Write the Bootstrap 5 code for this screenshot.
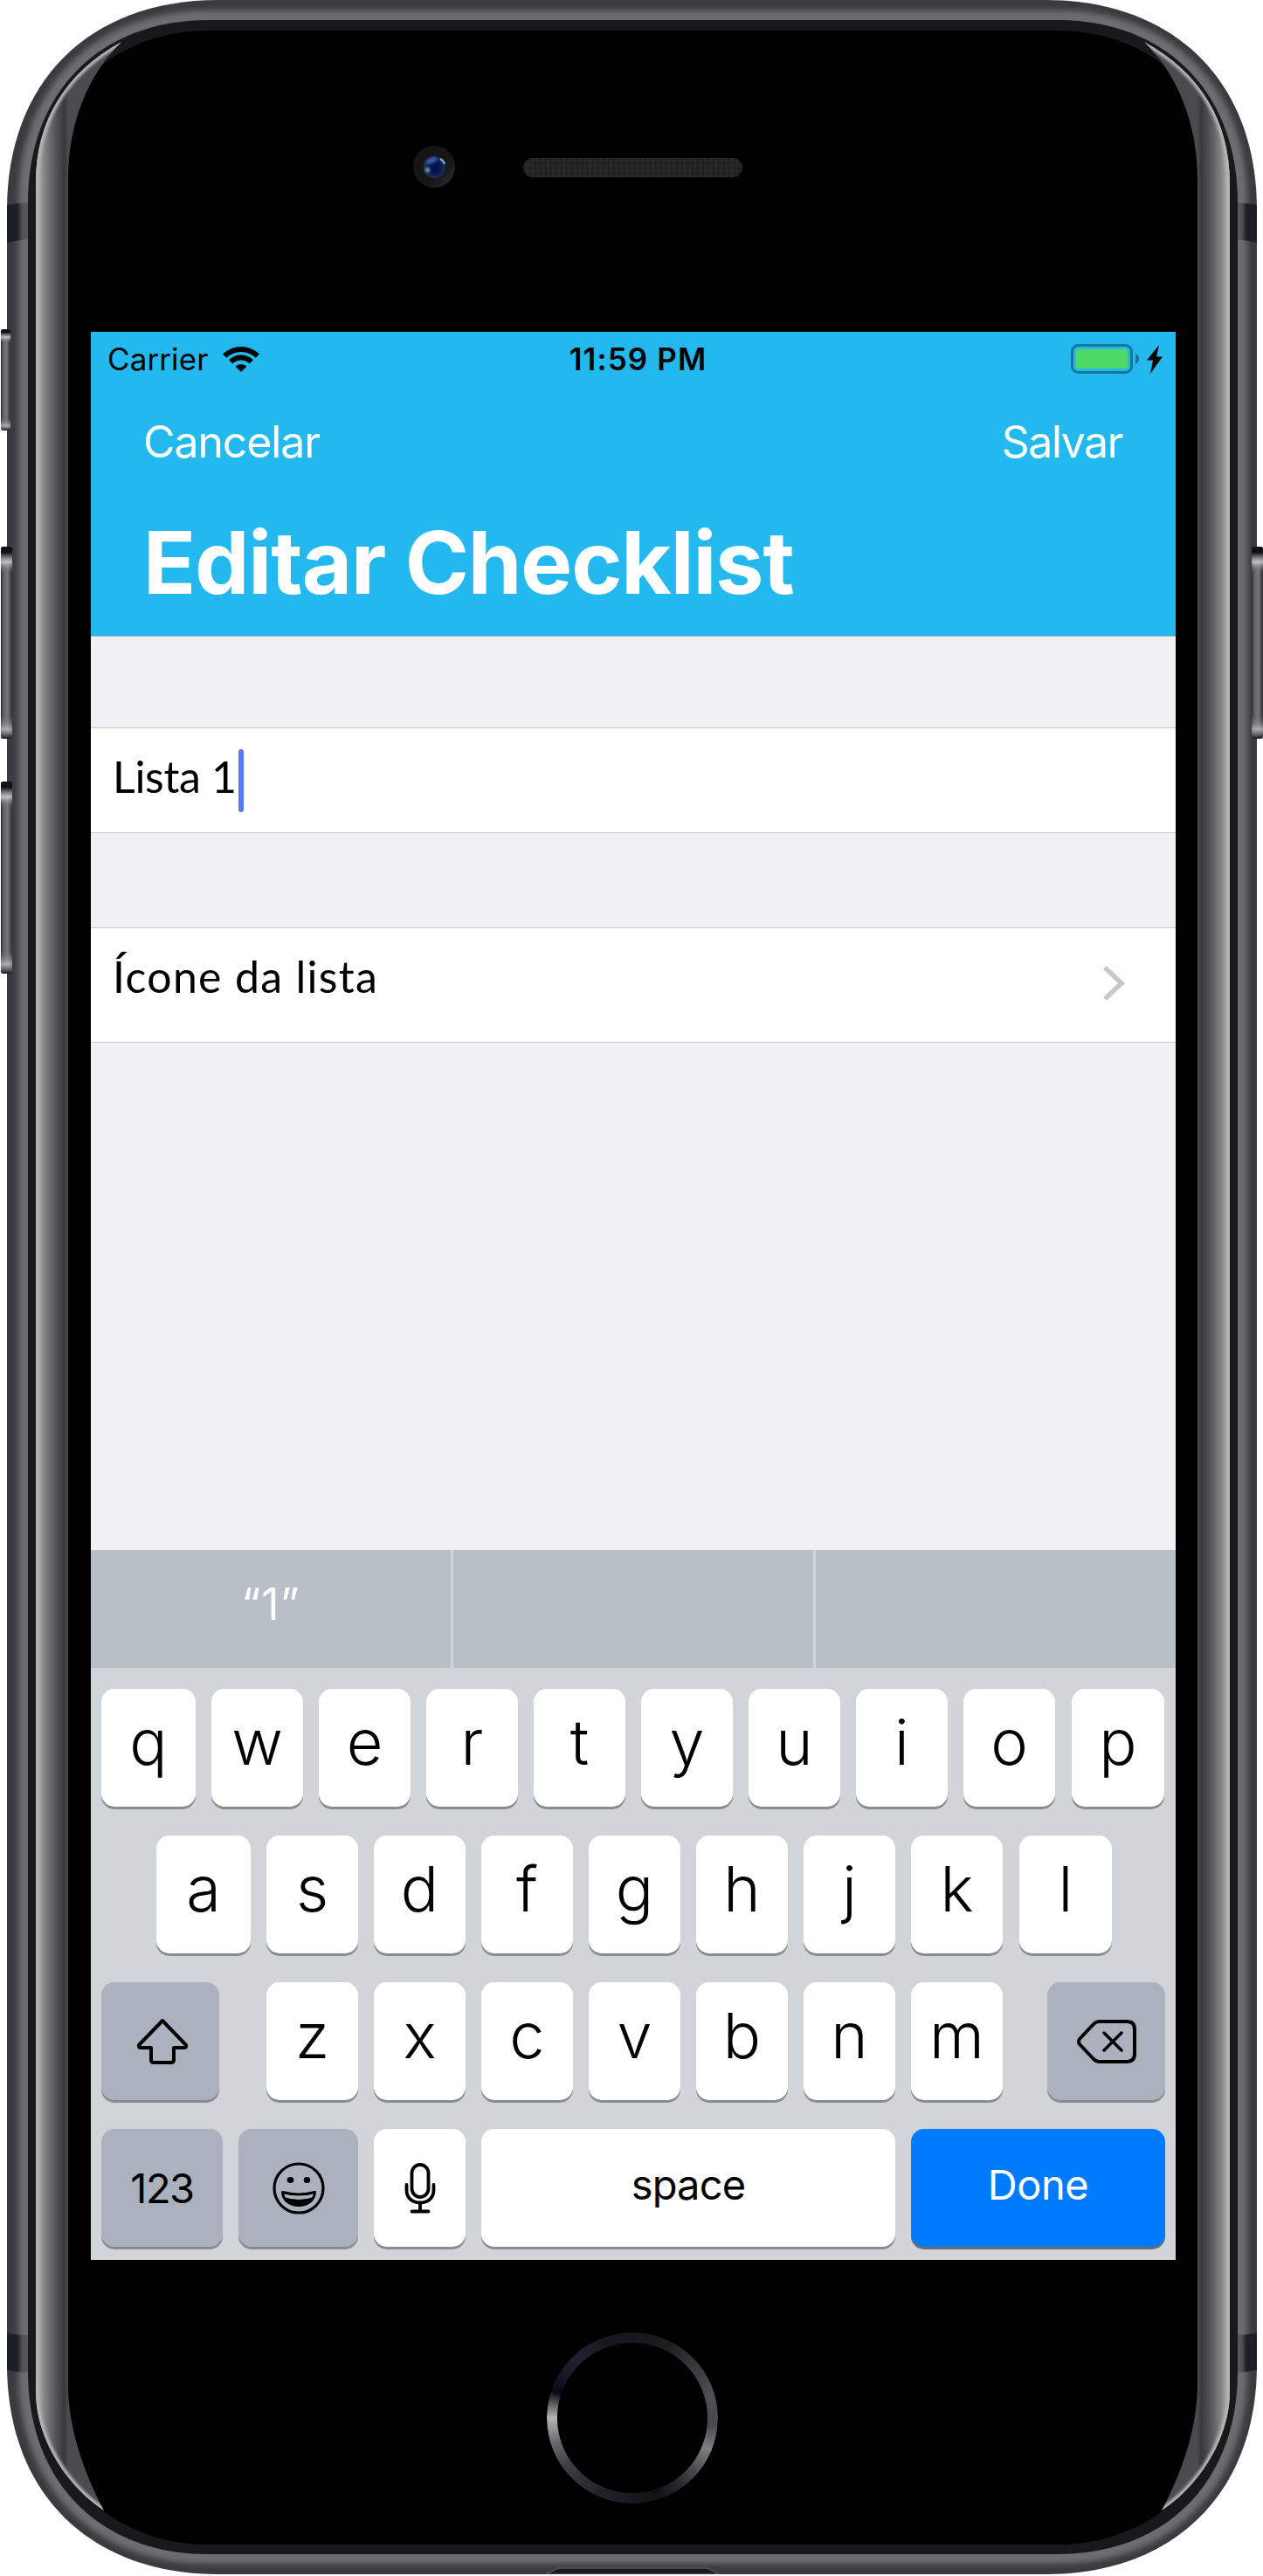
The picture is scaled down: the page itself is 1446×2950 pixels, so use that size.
<!DOCTYPE html>
<html lang="pt-BR">
<head>
<meta charset="utf-8">
<meta name="viewport" content="width=device-width, initial-scale=1">
<title>Editar Checklist</title>
<link href="https://cdn.jsdelivr.net/npm/bootstrap@5.3.0/dist/css/bootstrap.min.css" rel="stylesheet">
<style>
  body { background:#fff; font-family:Inter,"Liberation Sans",sans-serif; color:#000; }
  .phone { width:1446px; height:2950px; padding:380px 100px 0 104px; }
  .phone-shell { left:0; top:0; }
  .phone-screen { width:1242px; height:2208px; background:#efeff4; }
  .app-header { height:349px; background:#24b9ee; border-bottom:1px solid #a3a9ae; }
  .status-bar { height:60px; font-size:35px; line-height:1; padding:2px 15px 0 19px; }
  .status-bar svg { display:block; }
  .carrier { letter-spacing:.1px; }
  .clock { left:0; right:0; text-align:center; font-weight:600; letter-spacing:1.1px; padding-left:11px; }
  .app-nav { height:132px; padding:0 61px 0 60px; --bs-navbar-padding-y:0; }
  .app-nav .btn { --bs-btn-font-size:50px; --bs-btn-padding-x:0; --bs-btn-padding-y:0; --bs-btn-line-height:1; --bs-btn-border-width:0; color:#fff; }
  .cancel-btn { letter-spacing:-1.1px; }
  .save-btn { letter-spacing:-1.5px; }
  .app-title { height:156px; padding:0 60px 12px; font-size:99px; font-weight:700; line-height:1; letter-spacing:-1.1px; color:#fff; }
  .form-rows { font-family:Lato,"Liberation Sans",sans-serif; }
  .form-rows .list-group-item { border:solid #c8c7cc; border-width:1px 0; font-size:50px; line-height:1; padding:0 58px 0 25px; color:#000; background:#fff; }
  .row-name { margin-top:104px; height:121px; padding-bottom:10px !important; letter-spacing:-.3px; }
  .form-rows .row-icon { margin-top:108px; height:132px; letter-spacing:1.3px; border-top-width:1px; }
  .row-icon .lbl { padding-bottom:20px; }
  .row-icon svg { margin-bottom:4px; }
  .caret { width:6px; height:72px; border-radius:3px; background:#5479f1; margin:10px 0 0 2px; }
  .keyboard { background:#d1d4d9; height:813px; }
  .predictions { height:135px; background:#b8bfc7; color:#fff; font-size:50px; font-weight:400; line-height:1; letter-spacing:1px; }
  .predictions > div { flex:1 1 0; padding-bottom:12px; }
  .predictions > div + div { border-left:3px solid #d1d4d9; }
  .key-rows { padding:24px 12px 0; gap:33px; }
  .key-row { gap:18px; height:135px; }
  .key-row .btn { --bs-btn-padding-x:0; --bs-btn-padding-y:0; --bs-btn-border-width:0; --bs-btn-border-radius:15px; --bs-btn-line-height:1; --bs-btn-bg:#fff; --bs-btn-color:#000; width:105px; height:135px; font-size:72px; font-weight:350; padding-bottom:13px; box-shadow:0 3px 0 #888b8f; flex:none; display:flex; align-items:center; justify-content:center; }
  .key-row .btn.wide-start { width:108px; }
  .key-row .btn.wide-end { width:106px; margin-left:1px; }
  .key-row .btn.mod { --bs-btn-bg:#abb2bd; width:135px; padding-bottom:0; }
  .key-row .btn.numkey { width:139px; font-size:47px; font-weight:400; letter-spacing:-1.5px; }
  .key-row .btn.emojikey { width:137px; }
  .key-row .btn.mic { padding:0; }
  .key-row .btn.spacekey { width:474px; font-size:47px; font-weight:400; padding-bottom:9px; letter-spacing:-.8px; }
  .key-row .btn.donekey { --bs-btn-bg:#007aff; --bs-btn-color:#fff; width:291px; font-size:47px; font-weight:400; padding-bottom:9px; box-shadow:0 3px 0 #686c72; letter-spacing:-.5px; }
  .home-row { padding:0 61px 0 63px; }
  .letters { gap:18px; margin:0 auto 0 36px; }
</style>
</head>
<body>
<main class="phone position-relative overflow-hidden">
  <svg class="phone-shell position-absolute" width="1446" height="2950" viewBox="0 0 1446 2950" aria-hidden="true">
    <defs>
      <linearGradient id="btnL" x1="0" x2="1"><stop offset="0" stop-color="#26272b"/><stop offset=".2" stop-color="#5d5e63"/><stop offset=".6" stop-color="#77787c"/><stop offset="1" stop-color="#2b2c30"/></linearGradient>
      <linearGradient id="btnV" x1="0" x2="0" y1="0" y2="1"><stop offset="0" stop-color="#101114"/><stop offset=".03" stop-color="#101114"/><stop offset=".08" stop-color="#d8d8da" stop-opacity=".8"/><stop offset=".14" stop-color="#555" stop-opacity="0"/><stop offset=".87" stop-color="#555" stop-opacity="0"/><stop offset=".95" stop-color="#c8c8ca" stop-opacity=".7"/><stop offset="1" stop-color="#101114"/></linearGradient>
      <linearGradient id="rim" gradientUnits="userSpaceOnUse" x1="41" x2="78" y1="0" y2="0"><stop offset="0" stop-color="#b4b4b4"/><stop offset=".1" stop-color="#a5a5a4"/><stop offset=".28" stop-color="#828382"/><stop offset=".6" stop-color="#55565a"/><stop offset=".88" stop-color="#37383c"/><stop offset="1" stop-color="#4a4b4f"/></linearGradient>
      <linearGradient id="band" x1="0" x2="1"><stop offset="0" stop-color="#1b1f24"/><stop offset=".5" stop-color="#1d2126"/><stop offset=".72" stop-color="#505156"/><stop offset="1" stop-color="#58595d"/></linearGradient>
      <linearGradient id="camRing" x1="0" y1="0" x2="1" y2="1"><stop offset="0" stop-color="#161616"/><stop offset=".6" stop-color="#151515"/><stop offset="1" stop-color="#303030"/></linearGradient>
      <radialGradient id="lens"><stop offset="0" stop-color="#000f55"/><stop offset=".45" stop-color="#04154f"/><stop offset="1" stop-color="#222f52"/></radialGradient>
      <pattern id="mesh" width="6" height="6" patternUnits="userSpaceOnUse"><rect width="6" height="6" fill="#292929"/><path d="M0 .5H6M.5 0V6" stroke="#1e1e1e" stroke-width="2"/></pattern>
      <filter id="soft3" x="-5%" y="-5%" width="110%" height="110%"><feGaussianBlur stdDeviation="3"/></filter>
      <filter id="soft2" x="-50%" y="-50%" width="200%" height="200%"><feGaussianBlur stdDeviation="1.6"/></filter>
      <path id="outer" d="M250 0H1197C1347 0 1439 96 1439 240V2708C1439 2852 1347 2948 1197 2948H250C100 2948 8 2852 8 2708V240C8 96 100 0 250 0Z"/>
      <path id="inner" d="M238 23H1211C1334 23 1417 105 1417 232V2716C1417 2843 1334 2925 1211 2925H238C115 2925 32 2843 32 2716V232C32 105 115 23 238 23Z"/>
      <path id="rimShape" d="M139 48C75 83 41 138 41 210V2738C41 2795 78 2848 119 2875C92 2824 78 2775 78 2730V205C78 140 102 84 139 48Z"/>
      <clipPath id="outerClip"><use href="#outer"/></clipPath>
      <clipPath id="rimClip"><use href="#rimShape"/></clipPath>
    </defs>
    <use href="#outer" fill="#3a3b3f"/>
    <g clip-path="url(#outerClip)"><use href="#inner" fill="none" stroke="#6c6d70" stroke-width="22" filter="url(#soft3)"/></g>
    <g fill="url(#btnL)"><rect x="1" y="377" width="11" height="116" rx="3"/><rect x="1" y="626" width="13" height="220" rx="3"/><rect x="1" y="895" width="13" height="220" rx="3"/><rect x="1433" y="626" width="13" height="220" rx="3"/></g>
    <g fill="url(#btnV)"><rect x="1" y="377" width="11" height="116" rx="3"/><rect x="1" y="626" width="13" height="220" rx="3"/><rect x="1" y="895" width="13" height="220" rx="3"/><rect x="1433" y="626" width="13" height="220" rx="3"/></g>
    <path d="M8 235Q20 232 32 232V274Q20 275 8 278Z" fill="url(#band)"/>
    <path d="M8 2672Q20 2674 32 2674V2717Q20 2717 8 2714Z" fill="url(#band)"/>
    <g transform="translate(1447 0) scale(-1 1)">
      <path d="M8 235Q20 232 32 232V274Q20 275 8 278Z" fill="url(#band)"/>
      <path d="M8 2672Q20 2674 32 2674V2717Q20 2717 8 2714Z" fill="url(#band)"/>
    </g>
    <use href="#inner" fill="#18191b"/>
    <path fill="#000" d="M238 35H1211C1324 35 1406 120 1406 225V2724C1406 2829 1324 2914 1211 2914H238C125 2914 43 2829 43 2724V225C43 120 125 35 238 35Z"/>
    <g id="rimSide">
      <rect x="32" y="235" width="10" height="2480" fill="#18191b"/>
      <use href="#rimShape" fill="url(#rim)"/>
      <path clip-path="url(#rimClip)" d="M139 48C75 83 41 138 41 210V2738C41 2795 78 2848 119 2875" fill="none" stroke="#b5b5b5" stroke-width="7" filter="url(#soft2)"/>
    </g>
    <use href="#rimSide" transform="translate(1449 0) scale(-1 1)"/>
    <circle cx="497" cy="191" r="24" fill="url(#camRing)"/>
    <circle cx="497.5" cy="191.5" r="12.5" fill="url(#lens)"/>
    <ellipse cx="494" cy="184" rx="7" ry="3" transform="rotate(-25 494 184)" fill="#3b5bb5" filter="url(#soft2)"/>
    <circle cx="489.500" cy="194.500" r="2.500" fill="#93abc4" filter="url(#soft2)"/>
    <path d="M504 182Q508 184 509 188" stroke="#6fb6d8" stroke-width="2" fill="none"/>
    <rect x="599" y="181" width="251" height="22" rx="11" fill="url(#mesh)"/>
    <foreignObject x="626" y="2671" width="196" height="196">
      <div xmlns="http://www.w3.org/1999/xhtml" style="width:196px;height:196px;border-radius:50%;background:conic-gradient(#16171c 0deg,#1b1b20 25deg,#38393d 50deg,#4f5055 75deg,#48484e 95deg,#7e7f82 112deg,#4a4b4f 130deg,#26272c 145deg,#101118 162deg,#18191f 180deg,#23242a 205deg,#3f4046 235deg,#68696d 252deg,#b4b4b4 270deg,#777 277deg,#08090e 289deg,#15172a 300deg,#20222e 318deg,#16171c 345deg);mask:radial-gradient(circle,transparent 85.500px,#000 86.500px);-webkit-mask:radial-gradient(circle,transparent 85.500px,#000 86.500px)"></div>
    </foreignObject>
    <path d="M625 2948L635 2943Q637 2941 641 2941H808Q812 2941 814 2943L823 2948Z" fill="#1b1c1d" stroke="#55565a" stroke-width="1.500"/>
    <rect y="2948" width="1446" height="2" fill="#fff"/>
  </svg>

  <section class="phone-screen position-relative d-flex flex-column">
    <header class="app-header">
      <div class="status-bar position-relative d-flex align-items-center">
        <span class="carrier">Carrier</span>
        <svg class="ms-3" width="44" height="32" viewBox="0 0 44 32" aria-label="Wi-Fi"><path d="M1 10.500A30 30 0 0 1 43 10.500L38.700 14.700A24 24 0 0 0 5.300 14.700Z"/><path d="M8 17.300A20 20 0 0 1 36 17.300L31.700 21.500A14 14 0 0 0 12.300 21.500Z"/><path d="M15.500 24.600A10 10 0 0 1 28.500 24.600L22 31Z"/></svg>
        <span class="clock position-absolute">11:59 PM</span>
        <svg class="ms-auto" width="106" height="36" viewBox="1225 392 106 36" aria-label="Bateria"><rect x="1227.500" y="394.500" width="68" height="31" rx="7" fill="none" stroke="#19759a" stroke-width="3"/><rect x="1232" y="399" width="59" height="22" rx="3.500" fill="#4cd964"/><path d="M1300 404Q1304 405.500 1304 410T1300 416Z" fill="#19759a"/><path d="M1327 394L1313 411.500H1320L1317 427L1331 407.500H1324Z"/></svg>
      </div>
      <nav class="navbar app-nav flex-nowrap">
        <button class="btn cancel-btn" type="button">Cancelar</button>
        <button class="btn save-btn" type="button">Salvar</button>
      </nav>
      <h1 class="app-title d-flex align-items-center m-0">Editar Checklist</h1>
    </header>

    <div class="form-rows list-group rounded-0">
      <div class="row-name list-group-item rounded-0 d-flex align-items-center"><span>Lista 1</span><span class="caret"></span></div>
      <a class="row-icon list-group-item rounded-0 d-flex align-items-center justify-content-between" href="#"><span class="lbl">Ícone da lista</span>
        <svg width="26" height="40" viewBox="0 0 26 40" fill="none" stroke="#c7c7cc" stroke-width="5.500" aria-hidden="true"><path d="M3 2L22 20L3 38"/></svg></a>
    </div>

    <div class="keyboard mt-auto">
      <div class="predictions d-flex">
        <div class="d-flex align-items-center justify-content-center">“1”</div><div></div><div></div>
      </div>
      <div class="key-rows d-flex flex-column">
        <div class="key-row d-flex">
          <button class="btn wide-start">q</button><button class="btn">w</button><button class="btn">e</button><button class="btn">r</button><button class="btn">t</button><button class="btn">y</button><button class="btn">u</button><button class="btn">i</button><button class="btn">o</button><button class="btn wide-end">p</button>
        </div>
        <div class="key-row home-row d-flex">
          <button class="btn wide-start">a</button><button class="btn">s</button><button class="btn">d</button><button class="btn">f</button><button class="btn">g</button><button class="btn">h</button><button class="btn">j</button><button class="btn">k</button><button class="btn wide-end">l</button>
        </div>
        <div class="key-row d-flex">
          <button class="btn mod" aria-label="Shift"><svg width="60" height="54" viewBox="0 0 60 54" fill="none" stroke="#000" stroke-width="4" stroke-linejoin="round" class="ms-1"><path d="M30 3L3 31Q2 34 5 34H17V48Q17 51 20 51H40Q43 51 43 48V34H55Q58 34 57 31Z"/></svg></button>
          <div class="letters d-flex">
            <button class="btn">z</button><button class="btn">x</button><button class="btn">c</button><button class="btn">v</button><button class="btn">b</button><button class="btn">n</button><button class="btn">m</button>
          </div>
          <button class="btn mod" aria-label="Delete"><svg width="70" height="52" viewBox="0 0 70 52" fill="none" stroke="#000" stroke-width="4" stroke-linejoin="round" stroke-linecap="round"><path d="M26 3H58Q67 3 67 12V40Q67 49 58 49H26Q23 49 20 46L4 29Q2 26 4 23L20 6Q23 3 26 3Z"/><path d="M32 16L52 36M52 16L32 36" stroke-width="3.500"/></svg></button>
        </div>
        <div class="key-row d-flex">
          <button class="btn mod numkey">123</button>
          <button class="btn mod emojikey" aria-label="Emoji"><svg width="60" height="60" viewBox="0 0 60 60"><circle cx="30" cy="30" r="28" fill="none" stroke="#000" stroke-width="3.200"/><ellipse cx="20.500" cy="20.500" rx="3.800" ry="3.600"/><ellipse cx="39.500" cy="20.500" rx="3.800" ry="3.600"/><path d="M11.500 34.500Q30 39.500 48.500 34.500C48 44 40 49.500 30 49.500S12 44 11.500 34.500Z" fill="none" stroke="#000" stroke-width="3" stroke-linejoin="round"/><path d="M13 40Q30 46 47 40Q42 50 30 50T13 40Z"/></svg></button>
          <button class="btn mic" aria-label="Ditado"><svg width="36" height="58" viewBox="0 0 36 58" fill="none" stroke="#000" stroke-width="3.800" stroke-linecap="round"><rect x="8.500" y="2" width="19" height="37" rx="9.500"/><path d="M2.500 25V31C2.500 40 9 45.500 18 45.500S33.500 40 33.500 31V25M18 46V55M8.500 55.500H27.500"/></svg></button>
          <button class="btn spacekey">space</button>
          <button class="btn donekey">Done</button>
        </div>
      </div>
    </div>
  </section>
</main>
<script src="https://cdn.jsdelivr.net/npm/bootstrap@5.3.0/dist/js/bootstrap.bundle.min.js"></script>
</body>
</html>
